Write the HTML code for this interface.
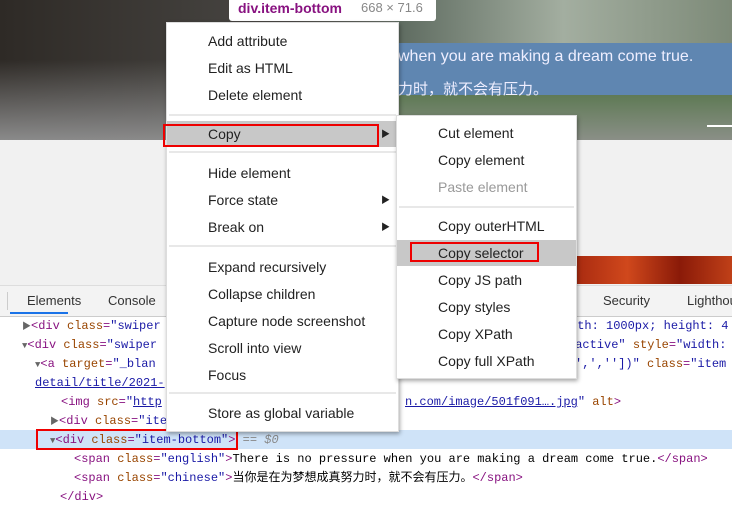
<!DOCTYPE html>
<html><head><meta charset="utf-8"><style>
body{margin:0;width:732px;height:499px;overflow:hidden;position:relative;background:#fff;font-family:"Liberation Sans","Noto Sans CJK SC",sans-serif}
.a{position:absolute}
.mono{font-family:"Liberation Mono","Noto Sans CJK SC",monospace;font-size:12px;white-space:pre;line-height:19px}
.menu{position:absolute;background:#fff;box-shadow:1px 2px 4px rgba(0,0,0,.35);border:1px solid #ddd;font-size:14px;color:#222}
.it{position:absolute;left:0;right:0;height:26px;line-height:26px;padding-left:41px}
.sep{position:absolute;left:2px;right:2px;height:2px;background:#e8e8e8}
.tag{color:#881280}.at{color:#994500}.av{color:#1a1aa6}.g{color:#666;font-size:9px}
</style></head><body>
<div class="a" style="left:0;top:0;width:732px;height:140px;background:linear-gradient(90deg,#2e2a26 0%,#4a4845 40%,#6f7a70 60%,#8a9a86 100%)"></div>
<div class="a" style="left:0;top:60px;width:400px;height:80px;background:linear-gradient(180deg,rgba(60,60,60,0),#8a8a8a)"></div>
<div class="a" style="left:395px;top:0;width:337px;height:45px;background:linear-gradient(90deg,#5d6a5f,#a3aea0,#7d8a78)"></div>
<div class="a" style="left:395px;top:43px;width:337px;height:52px;background:#5f86b1"></div>
<div class="a" style="left:395px;top:95px;width:337px;height:45px;background:linear-gradient(180deg,#5f7a55,#8a8f87)"></div>
<div class="a" style="left:398px;top:48px;color:#eef;font-size:16px">when you are making a dream come true.</div>
<div class="a" style="left:398px;top:78px;color:#eef;font-size:15px">力时，就不会有压力。</div>
<div class="a" style="left:707px;top:125px;width:25px;height:2px;background:#fff"></div>
<div class="a" style="left:0;top:140px;width:732px;height:145px;background:#f1f1f1"></div>
<div class="a" style="left:575px;top:256px;width:157px;height:28px;background:linear-gradient(90deg,#a82a10,#d0481c,#8a1a08,#c04018)"></div>
<div class="a" style="left:229px;top:0;width:207px;height:21px;background:#fff;border-radius:0 0 3px 3px"><span style="position:absolute;left:9px;top:0;color:#881280;font-weight:bold;font-size:14px">div.item-bottom</span><span style="position:absolute;left:132px;top:0;color:#888;font-size:13px">668 × 71.6</span></div>
<!-- devtools -->
<div class="a" style="left:0;top:285px;width:732px;height:30px;background:#f3f3f3;border-bottom:1px solid #ccc;border-top:1px solid #ddd"></div>
<div class="a" style="left:7px;top:292px;width:1px;height:18px;background:#ccc"></div>
<div class="a" style="left:27px;top:293px;font-size:13px;color:#333">Elements</div>
<div class="a" style="left:10px;top:312px;width:58px;height:2px;background:#1a73e8"></div>
<div class="a" style="left:108px;top:293px;font-size:13px;color:#333">Console</div>
<div class="a" style="left:603px;top:293px;font-size:13px;color:#333">Security</div>
<div class="a" style="left:687px;top:293px;font-size:13px;color:#333">Lighthouse</div>
<div class="a" style="left:0;top:430px;width:732px;height:19px;background:#cfe3f8"></div>
<div class="a mono" style="left:22px;top:317px"><span class="g">▶</span><span class="tag">&lt;div </span><span class="at">class</span><span class="tag">=</span><span class="av">"swiper</span></div>
<div class="a mono" style="left:570px;top:317px"><span class="av">dth: 1000px; height: 4</span></div>
<div class="a mono" style="left:22px;top:336px"><span class="g">▼</span><span class="tag">&lt;div </span><span class="at">class</span><span class="tag">=</span><span class="av">"swiper</span></div>
<div class="a mono" style="left:568px;top:336px"><span class="av">-active"</span> <span class="at">style</span><span class="tag">=</span><span class="av">"width:</span></div>
<div class="a mono" style="left:35px;top:355px"><span class="g">▼</span><span class="tag">&lt;a </span><span class="at">target</span><span class="tag">=</span><span class="av">"_blan</span></div>
<div class="a mono" style="left:575px;top:355px"><span class="av">',',''])"</span> <span class="at">class</span><span class="tag">=</span><span class="av">"item</span></div>
<div class="a mono" style="left:35px;top:374px"><span style="color:#1a1aa6;text-decoration:underline">detail/title/2021-</span></div>
<div class="a mono" style="left:61px;top:393px"><span class="tag">&lt;img </span><span class="at">src</span><span class="tag">=</span><span class="av">"<u>http</u></span></div>
<div class="a mono" style="left:405px;top:393px"><span class="av"><u>n.com/image/501f091….jpg</u>"</span> <span class="at">alt</span><span class="tag">&gt;</span></div>
<div class="a mono" style="left:50px;top:412px"><span class="g">▶</span><span class="tag">&lt;div </span><span class="at">class</span><span class="tag">=</span><span class="av">"ite</span></div>
<div class="a mono" style="left:50px;top:431px"><span class="g">▼</span><span class="tag">&lt;div </span><span class="at">class</span><span class="tag">=</span><span class="av">"item-bottom"</span><span class="tag">&gt;</span> <span style="color:#888"><i>== $0</i></span></div>
<div class="a mono" style="left:74px;top:450px"><span class="tag">&lt;span </span><span class="at">class</span><span class="tag">=</span><span class="av">"english"</span><span class="tag">&gt;</span>There is no pressure when you are making a dream come true.<span class="tag">&lt;/span&gt;</span></div>
<div class="a mono" style="left:74px;top:469px"><span class="tag">&lt;span </span><span class="at">class</span><span class="tag">=</span><span class="av">"chinese"</span><span class="tag">&gt;</span>当你是在为梦想成真努力时，就不会有压力。<span class="tag">&lt;/span&gt;</span></div>
<div class="a mono" style="left:60px;top:488px"><span class="tag">&lt;/div&gt;</span></div>
<div class="a" style="left:36px;top:429px;width:202px;height:21px;border:2px solid #e00;box-sizing:border-box"></div>
<!-- menu 1 -->
<div class="menu" style="left:166px;top:22px;width:231px;height:408px">
<div class="it" style="top:5px">Add attribute</div>
<div class="it" style="top:32px">Edit as HTML</div>
<div class="it" style="top:59px">Delete element</div>
<div class="sep" style="top:91px"></div>
<div class="it" style="top:98px;background:#c8c8c8">Copy<span style="position:absolute;right:8px;font-size:9px">▶</span></div>
<div class="sep" style="top:128px"></div>
<div class="it" style="top:137px">Hide element</div>
<div class="it" style="top:164px">Force state<span style="position:absolute;right:8px;font-size:9px">▶</span></div>
<div class="it" style="top:191px">Break on<span style="position:absolute;right:8px;font-size:9px">▶</span></div>
<div class="sep" style="top:222px"></div>
<div class="it" style="top:231px">Expand recursively</div>
<div class="it" style="top:258px">Collapse children</div>
<div class="it" style="top:285px">Capture node screenshot</div>
<div class="it" style="top:312px">Scroll into view</div>
<div class="it" style="top:339px">Focus</div>
<div class="sep" style="top:369px"></div>
<div class="it" style="top:377px">Store as global variable</div>
</div>
<div class="a" style="left:163px;top:124px;width:216px;height:23px;border:2px solid #e00;box-sizing:border-box"></div>
<!-- submenu -->
<div class="menu" style="left:396px;top:115px;width:179px;height:262px">
<div class="it" style="top:4px">Cut element</div>
<div class="it" style="top:31px">Copy element</div>
<div class="it" style="top:58px;color:#999">Paste element</div>
<div class="sep" style="top:90px"></div>
<div class="it" style="top:97px">Copy outerHTML</div>
<div class="it" style="top:124px;background:#c8c8c8">Copy selector</div>
<div class="it" style="top:151px">Copy JS path</div>
<div class="it" style="top:178px">Copy styles</div>
<div class="it" style="top:205px">Copy XPath</div>
<div class="it" style="top:232px">Copy full XPath</div>
</div>
<div class="a" style="left:410px;top:242px;width:129px;height:20px;border:2px solid #e00;box-sizing:border-box"></div>
</body></html>
